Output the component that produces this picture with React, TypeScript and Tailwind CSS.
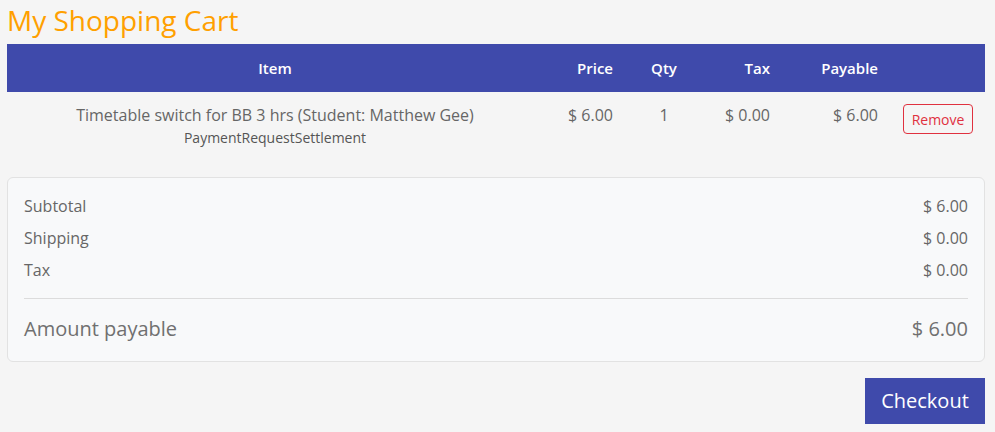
import React from "react";

export default function App() {
  const font = { fontFamily: '"Open Sans", "Liberation Sans", sans-serif' };
  return (
    <div className="min-h-[432px] w-full bg-[#f5f5f5] px-[7px] pb-2" style={font}>
      <h1 className="text-[28px] leading-[38px] text-[#ffa000] font-normal pt-[1px] mb-[5px]">My Shopping Cart</h1>
      <table className="w-[978px] border-collapse table-fixed">
        <colgroup>
          <col className="w-[536px]" />
          <col className="w-[82px]" />
          <col className="w-[78px]" />
          <col className="w-[79px]" />
          <col className="w-[108px]" />
          <col className="w-[95px]" />
        </colgroup>
        <thead>
          <tr className="bg-[#3f4aab] text-white h-[48px] text-[15px] font-semibold">
            <th className="px-3 text-center font-semibold">Item</th>
            <th className="px-3 text-right font-semibold">Price</th>
            <th className="px-3 text-center font-semibold">Qty</th>
            <th className="px-3 text-right font-semibold">Tax</th>
            <th className="px-3 text-right font-semibold">Payable</th>
            <th className="px-3"></th>
          </tr>
        </thead>
        <tbody>
          <tr className="align-top text-[#666666]">
            <td className="px-3 pt-[11px] pb-[27px] text-center">
              <div className="text-[16px] leading-[24px]">Timetable switch for BB 3 hrs (Student: Matthew Gee)</div>
              <div className="text-[14px] leading-[22px] text-[#555555]">PaymentRequestSettlement</div>
            </td>
            <td className="px-3 pt-[11px] text-right text-[16px] leading-[24px]">$ 6.00</td>
            <td className="px-3 pt-[11px] text-center text-[16px] leading-[24px]">1</td>
            <td className="px-3 pt-[11px] text-right text-[16px] leading-[24px]">$ 0.00</td>
            <td className="px-3 pt-[11px] text-right text-[16px] leading-[24px]">$ 6.00</td>
            <td className="pl-[13px] pt-[12px]">
              <button className="w-[70px] h-[30px] border border-[#e0313f] text-[#e0313f] rounded-[4px] text-[14px] bg-white/0">Remove</button>
            </td>
          </tr>
        </tbody>
      </table>
      <div className="mt-[1px] w-[978px] border border-[#e2e2e2] rounded-[6px] bg-[#f8f9fa] px-4 pt-3 pb-[14px] text-[#666666]">
        {[
          ["Subtotal", "$ 6.00"],
          ["Shipping", "$ 0.00"],
          ["Tax", "$ 0.00"],
        ].map(([l, v]) => (
          <div key={l} className="flex justify-between h-[32px] items-center text-[16px]">
            <span>{l}</span>
            <span>{v}</span>
          </div>
        ))}
        <div className="mt-[12px] border-t border-[#dcdcdc]" />
        <div className="mt-[12px] flex justify-between h-[36px] items-center text-[20px] text-[#707070]">
          <span>Amount payable</span>
          <span>$ 6.00</span>
        </div>
      </div>
      <div className="w-[978px] flex justify-end mt-[16px]">
        <button className="w-[120px] h-[46px] bg-[#3f4aab] text-white text-[20px]">Checkout</button>
      </div>
    </div>
  );
}
